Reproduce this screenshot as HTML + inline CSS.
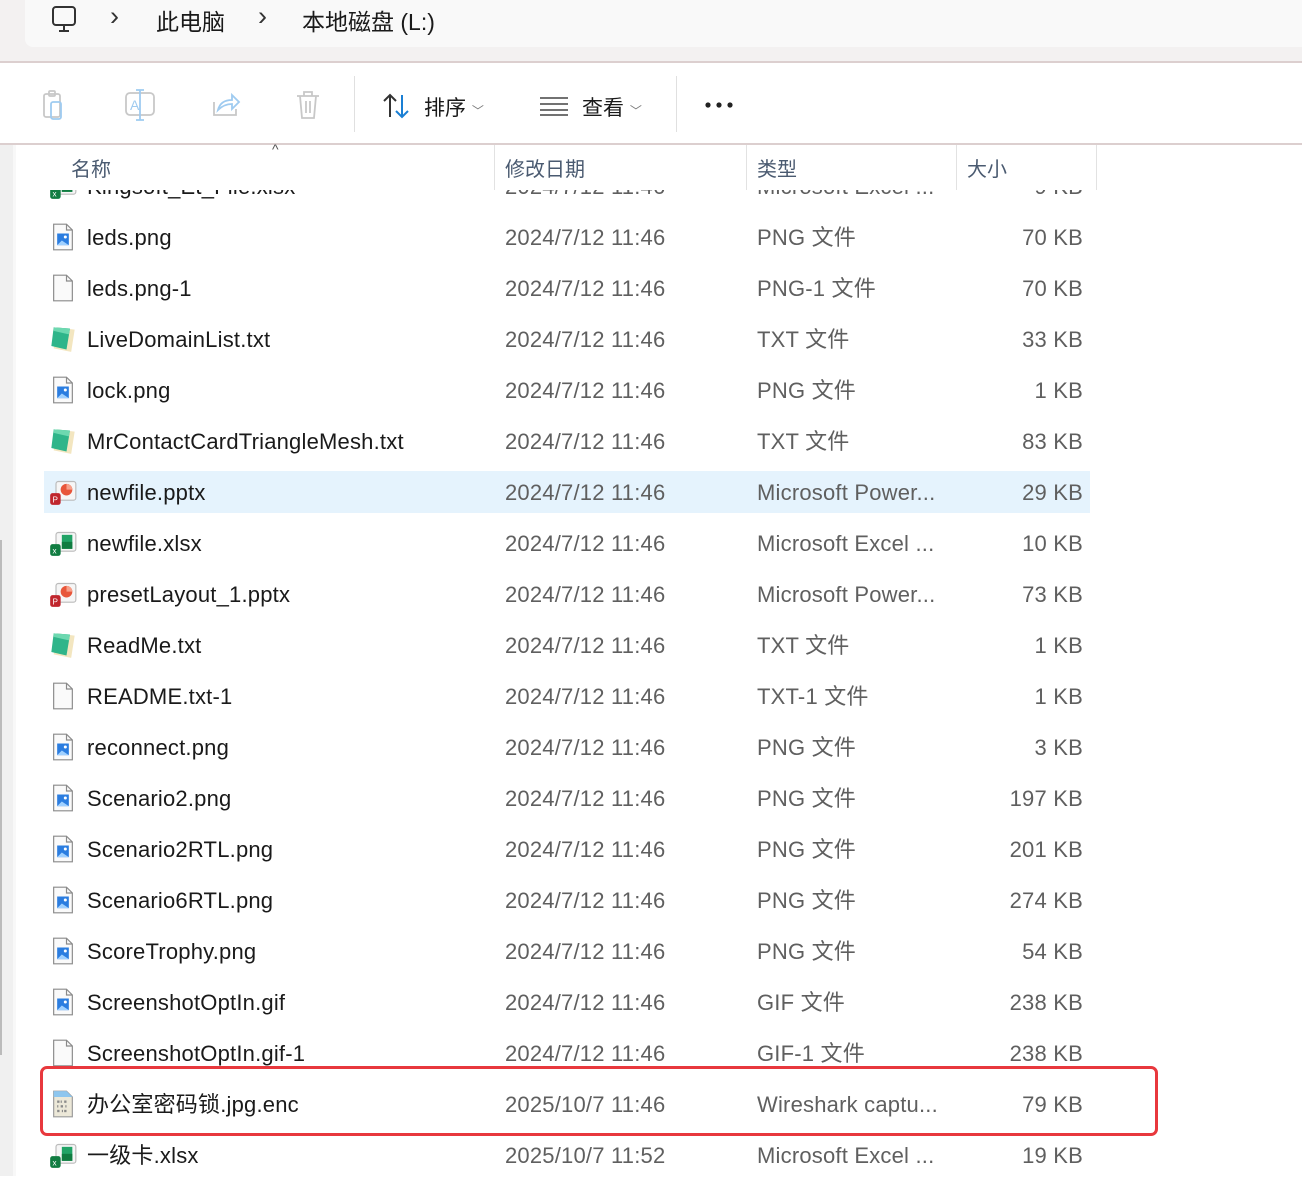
<!DOCTYPE html>
<html><head><meta charset="utf-8"><style>
body{margin:0;width:1302px;height:1199px;overflow:hidden;background:#fff;font-family:"Liberation Sans","Noto Sans CJK SC",sans-serif;position:relative}
.top{position:absolute;left:0;top:0;width:1302px;height:62px;background:#f3f1f1}
.addr{position:absolute;left:25px;top:-10px;width:1300px;height:57px;background:#f9f9f9;border-radius:8px}
.l1{position:absolute;left:0;top:61px;width:1302px;height:2px;background:#dccfcf}
.l2{position:absolute;left:0;top:143px;width:1302px;height:2px;background:#dccfcf}
.bc{position:absolute;top:3px;font-size:23px;color:#1a1a1a}
.tb{position:absolute;top:92px;font-size:21px;color:#1a1a1a}
.side{position:absolute;left:0;top:145px;width:13px;height:1031px;background:#f0f0f0}
.side2{position:absolute;left:13px;top:145px;width:3px;height:1031px;background:#f8f8f8}
.hdr{position:absolute;left:16px;top:145px;width:1286px;height:45px;background:#fff;z-index:2}
.hdr span{position:absolute;top:8px;font-size:20px;color:#4a5a70}
.vd{position:absolute;top:0;width:1px;height:45px;background:#e2e2e2}
.row{position:absolute;left:44px;width:1046px;height:42px;font-size:22px;line-height:44px;letter-spacing:0.2px}
.row .n{position:absolute;left:43px;color:#1a1a1a;white-space:nowrap}
.row .d{position:absolute;left:461px;color:#5f5f5f}
.row .t{position:absolute;left:713px;color:#5f5f5f;white-space:nowrap}
.row .s{position:absolute;right:7px;color:#5f5f5f}
.row svg{position:absolute;left:5px;top:7px}
.hl{background:#e5f3fd}
.red{position:absolute;left:40px;top:1066px;width:1112px;height:64px;border:3px solid #e8383d;border-radius:7px;z-index:3}
</style></head><body>
<svg width="0" height="0" style="position:absolute"><defs>
<symbol id="png" viewBox="0 0 24 24"><path d="M4 1h11l5 5v17H4z" fill="#fafafa" stroke="#8a8a8a"/><path d="M15 1v5h5" fill="none" stroke="#8a8a8a"/><rect x="7" y="9" width="10" height="10" fill="#2b7de0"/><path d="M7 19l4-4 6 4z" fill="#9fd0ff"/><circle cx="14" cy="12" r="1.3" fill="#fff"/></symbol>
<symbol id="blank" viewBox="0 0 24 24"><path d="M4 1h11l5 5v17H4z" fill="#fafafa" stroke="#8a8a8a"/><path d="M15 1v5h5" fill="none" stroke="#8a8a8a"/></symbol>
<symbol id="txt" viewBox="0 0 24 24"><path d="M7 2l15 2-3 19-15-3z" fill="#f3e6c0"/><path d="M4 2l14 1-3 18-13-3z" fill="#2fb58a"/><path d="M4 2l14 1-1 5-13-3z" fill="#6dd8b0"/></symbol>
<symbol id="ppt" viewBox="0 0 24 24"><rect x="6" y="3" width="17" height="16" rx="2" fill="#f6f6f6" stroke="#bbb"/><circle cx="15" cy="10" r="5" fill="#e8563a"/><path d="M15 10V5a5 5 0 0 1 5 5z" fill="#f7a08a"/><rect x="1" y="13" width="9" height="10" rx="2" fill="#c0262d"/><text x="3" y="21" font-size="7" fill="#fff" font-family="Liberation Sans">P</text></symbol>
<symbol id="xls" viewBox="0 0 24 24"><rect x="6" y="3" width="17" height="16" rx="2" fill="#f6f6f6" stroke="#bbb"/><rect x="11" y="5" width="9" height="12" fill="#21a366"/><rect x="11" y="11" width="9" height="6" fill="#107c41"/><rect x="1" y="13" width="9" height="10" rx="2" fill="#107c41"/><text x="3" y="21" font-size="7" fill="#fff" font-family="Liberation Sans">x</text></symbol>
<symbol id="enc" viewBox="0 0 24 24"><path d="M4 1h11l5 5v17H4z" fill="#ece8d8" stroke="#9a9a9a"/><path d="M4 1h11l5 5H4z" fill="#8ec6ee"/><g fill="#8a8a8a"><rect x="7" y="9" width="2" height="2"/><rect x="10" y="9" width="1" height="2"/><rect x="13" y="9" width="2" height="2"/><rect x="7" y="13" width="1" height="2"/><rect x="10" y="13" width="2" height="2"/><rect x="14" y="13" width="1" height="2"/><rect x="7" y="17" width="2" height="2"/><rect x="11" y="17" width="1" height="2"/><rect x="13" y="17" width="2" height="2"/></g></symbol>
</defs></svg>
<div class="top"><div class="addr"></div></div>
<svg style="position:absolute;left:50px;top:5px" width="28" height="28" viewBox="0 0 28 28"><rect x="3" y="2" width="22" height="18" rx="3" fill="none" stroke="#333" stroke-width="2"/><path d="M9 26h10M14 20v6" stroke="#333" stroke-width="2"/></svg>
<div class="bc" style="left:110px;color:#333;font-size:27px;top:1px">›</div>
<div class="bc" style="left:156px">此电脑</div>
<div class="bc" style="left:258px;color:#333;font-size:27px;top:1px">›</div>
<div class="bc" style="left:302px">本地磁盘 (L:)</div>
<div class="l1"></div>
<svg style="position:absolute;left:40px;top:88px" width="290" height="36" viewBox="0 0 290 36">
<g fill="none" stroke="#c8c8c8" stroke-width="1.8"><rect x="4" y="6" width="16" height="23" rx="2"/><rect x="9" y="3" width="6" height="5" rx="1"/></g><rect x="11" y="14" width="10" height="17" rx="2" fill="none" stroke="#9fcbf0" stroke-width="1.8"/>
<g transform="translate(84,0)"><rect x="2" y="5" width="28" height="22" rx="4" fill="none" stroke="#c8c8c8" stroke-width="1.8"/><path d="M16 2v30M12 2h8M12 32h8" stroke="#9fcbf0" stroke-width="1.8"/><text x="6" y="22" font-size="14" fill="#9fcbf0" font-family="Liberation Sans">A</text></g>
<g transform="translate(170,0)"><path d="M4 14v13h22v-6" fill="none" stroke="#c8c8c8" stroke-width="1.8"/><path d="M8 22c2-8 8-10 14-10V7l7 7-7 7v-5c-6 0-10 2-14 6z" fill="none" stroke="#9fcbf0" stroke-width="1.8"/></g>
<g transform="translate(254,0)" fill="none" stroke="#c8c8c8" stroke-width="1.8"><path d="M3 8h22M10 8V4h8v4M6 8l2 22h12l2-22M12 13v12M16 13v12"/></g>
</svg>
<div style="position:absolute;left:354px;top:76px;width:1px;height:56px;background:#e0e0e0"></div>
<svg style="position:absolute;left:382px;top:92px" width="30" height="28" viewBox="0 0 30 28"><path d="M8 25V3M2 9l6-6 6 6" fill="none" stroke="#333" stroke-width="2"/><path d="M20 3v22M14 19l6 6 6-6" fill="none" stroke="#1a7fd4" stroke-width="2"/></svg>
<div class="tb" style="left:424px">排序 <span style="font-size:12px;color:#777">﹀</span></div>
<svg style="position:absolute;left:540px;top:96px" width="28" height="20"><path d="M0 2h28M0 8h28M0 14h28M0 19h28" stroke="#444" stroke-width="1.6"/></svg>
<div class="tb" style="left:582px">查看 <span style="font-size:12px;color:#777">﹀</span></div>
<div style="position:absolute;left:676px;top:76px;width:1px;height:56px;background:#e0e0e0"></div>
<svg style="position:absolute;left:704px;top:100px" width="32" height="10"><circle cx="4" cy="5" r="2.6" fill="#222"/><circle cx="15" cy="5" r="2.6" fill="#222"/><circle cx="26" cy="5" r="2.6" fill="#222"/></svg>
<div class="l2"></div>
<div class="side"></div><div class="side2"></div>
<div style="position:absolute;left:0;top:540px;width:2px;height:515px;background:#bbb"></div>
<div class="hdr">
<div style="position:absolute;left:256px;top:-4px;font-size:14px;color:#555">^</div>
<span style="left:55px">名称</span><div class="vd" style="left:478px"></div>
<span style="left:489px">修改日期</span><div class="vd" style="left:730px"></div>
<span style="left:741px">类型</span><div class="vd" style="left:940px"></div>
<span style="left:951px">大小</span><div class="vd" style="left:1080px"></div>
</div>

<div class="row" style="top:165px"><svg width="28" height="28"><use href="#xls"/></svg><span class="n">Kingsoft_Et_File.xlsx</span><span class="d">2024/7/12 11:46</span><span class="t">Microsoft Excel ...</span><span class="s">9 KB</span></div>
<div class="row" style="top:216px"><svg width="28" height="28"><use href="#png"/></svg><span class="n">leds.png</span><span class="d">2024/7/12 11:46</span><span class="t">PNG 文件</span><span class="s">70 KB</span></div>
<div class="row" style="top:267px"><svg width="28" height="28"><use href="#blank"/></svg><span class="n">leds.png-1</span><span class="d">2024/7/12 11:46</span><span class="t">PNG-1 文件</span><span class="s">70 KB</span></div>
<div class="row" style="top:318px"><svg width="28" height="28"><use href="#txt"/></svg><span class="n">LiveDomainList.txt</span><span class="d">2024/7/12 11:46</span><span class="t">TXT 文件</span><span class="s">33 KB</span></div>
<div class="row" style="top:369px"><svg width="28" height="28"><use href="#png"/></svg><span class="n">lock.png</span><span class="d">2024/7/12 11:46</span><span class="t">PNG 文件</span><span class="s">1 KB</span></div>
<div class="row" style="top:420px"><svg width="28" height="28"><use href="#txt"/></svg><span class="n">MrContactCardTriangleMesh.txt</span><span class="d">2024/7/12 11:46</span><span class="t">TXT 文件</span><span class="s">83 KB</span></div>
<div class="row hl" style="top:471px"><svg width="28" height="28"><use href="#ppt"/></svg><span class="n">newfile.pptx</span><span class="d">2024/7/12 11:46</span><span class="t">Microsoft Power...</span><span class="s">29 KB</span></div>
<div class="row" style="top:522px"><svg width="28" height="28"><use href="#xls"/></svg><span class="n">newfile.xlsx</span><span class="d">2024/7/12 11:46</span><span class="t">Microsoft Excel ...</span><span class="s">10 KB</span></div>
<div class="row" style="top:573px"><svg width="28" height="28"><use href="#ppt"/></svg><span class="n">presetLayout_1.pptx</span><span class="d">2024/7/12 11:46</span><span class="t">Microsoft Power...</span><span class="s">73 KB</span></div>
<div class="row" style="top:624px"><svg width="28" height="28"><use href="#txt"/></svg><span class="n">ReadMe.txt</span><span class="d">2024/7/12 11:46</span><span class="t">TXT 文件</span><span class="s">1 KB</span></div>
<div class="row" style="top:675px"><svg width="28" height="28"><use href="#blank"/></svg><span class="n">README.txt-1</span><span class="d">2024/7/12 11:46</span><span class="t">TXT-1 文件</span><span class="s">1 KB</span></div>
<div class="row" style="top:726px"><svg width="28" height="28"><use href="#png"/></svg><span class="n">reconnect.png</span><span class="d">2024/7/12 11:46</span><span class="t">PNG 文件</span><span class="s">3 KB</span></div>
<div class="row" style="top:777px"><svg width="28" height="28"><use href="#png"/></svg><span class="n">Scenario2.png</span><span class="d">2024/7/12 11:46</span><span class="t">PNG 文件</span><span class="s">197 KB</span></div>
<div class="row" style="top:828px"><svg width="28" height="28"><use href="#png"/></svg><span class="n">Scenario2RTL.png</span><span class="d">2024/7/12 11:46</span><span class="t">PNG 文件</span><span class="s">201 KB</span></div>
<div class="row" style="top:879px"><svg width="28" height="28"><use href="#png"/></svg><span class="n">Scenario6RTL.png</span><span class="d">2024/7/12 11:46</span><span class="t">PNG 文件</span><span class="s">274 KB</span></div>
<div class="row" style="top:930px"><svg width="28" height="28"><use href="#png"/></svg><span class="n">ScoreTrophy.png</span><span class="d">2024/7/12 11:46</span><span class="t">PNG 文件</span><span class="s">54 KB</span></div>
<div class="row" style="top:981px"><svg width="28" height="28"><use href="#png"/></svg><span class="n">ScreenshotOptIn.gif</span><span class="d">2024/7/12 11:46</span><span class="t">GIF 文件</span><span class="s">238 KB</span></div>
<div class="row" style="top:1032px"><svg width="28" height="28"><use href="#blank"/></svg><span class="n">ScreenshotOptIn.gif-1</span><span class="d">2024/7/12 11:46</span><span class="t">GIF-1 文件</span><span class="s">238 KB</span></div>
<div class="row" style="top:1083px"><svg width="28" height="28"><use href="#enc"/></svg><span class="n">办公室密码锁.jpg.enc</span><span class="d">2025/10/7 11:46</span><span class="t">Wireshark captu...</span><span class="s">79 KB</span></div>
<div class="row" style="top:1134px"><svg width="28" height="28"><use href="#xls"/></svg><span class="n">一级卡.xlsx</span><span class="d">2025/10/7 11:52</span><span class="t">Microsoft Excel ...</span><span class="s">19 KB</span></div>
<div class="red"></div>
<div style="position:absolute;left:0;top:1176px;width:1302px;height:23px;background:#fff;z-index:1"></div>
</body></html>
